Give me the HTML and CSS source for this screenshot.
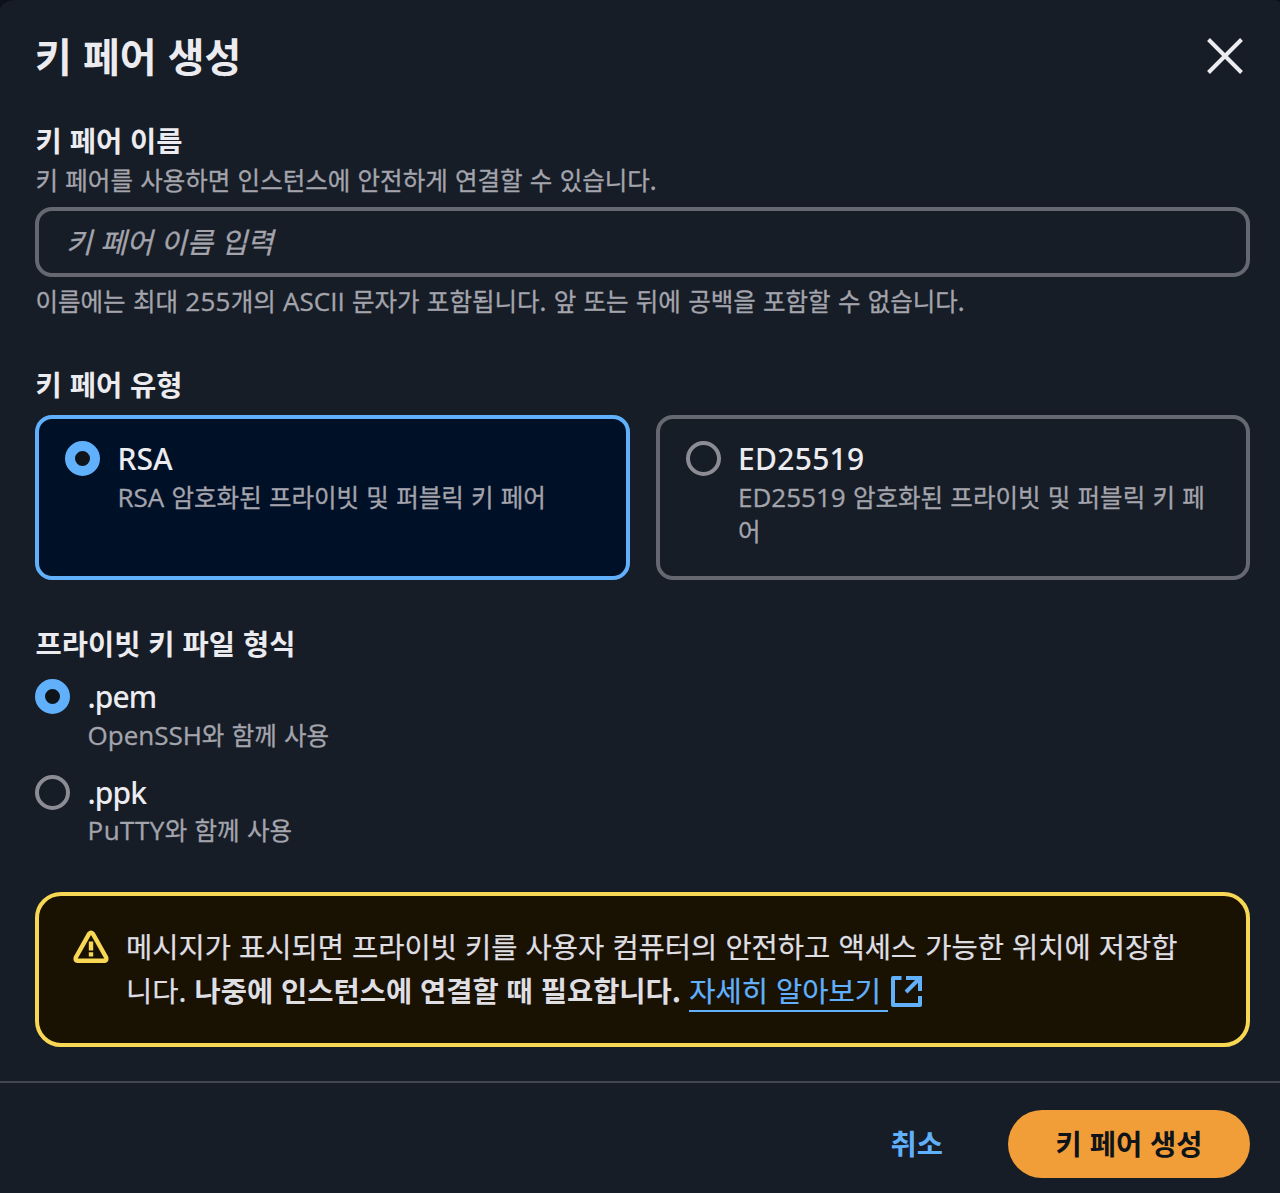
FILE: index.html
```html
<!DOCTYPE html>
<html lang="ko">
<head>
<meta charset="utf-8">
<title>키 페어 생성</title>
<link rel="stylesheet" href="styles.css">
</head>
<body>
<div class="modal" role="dialog" aria-labelledby="title">
  <header class="header">
    <h1 class="title" id="title">키 페어 생성</h1>
    <button class="close" aria-label="닫기">
      <svg width="36" height="36" viewBox="0 0 36 36" fill="none" stroke="#ebebf0" stroke-width="4"><path d="M1.500 1.500L34.500 34.500M34.500 1.500L1.500 34.500"/></svg>
    </button>
  </header>

  <main class="content">
    <section class="field name-field">
      <label class="label" for="name">키 페어 이름</label>
      <p class="desc name-desc">키 페어를 사용하면 인스턴스에 안전하게 연결할 수 있습니다.</p>
      <input class="input" id="name" type="text" placeholder="키 페어 이름 입력">
      <p class="desc constraint">이름에는 최대 <span class="latin digits">255</span>개의 <span class="latin">ASCII</span> 문자가 포함됩니다. 앞 또는 뒤에 공백을 포함할 수 없습니다.</p>
    </section>

    <section class="field type-field">
      <h2 class="label">키 페어 유형</h2>
      <div class="tiles">
        <label class="tile tile-selected">
          <span class="radio radio-on"></span>
          <span class="option">
            <span class="option-name">RSA</span>
            <span class="desc"><span class="latin">RSA</span> 암호화된 프라이빗 및 퍼블릭 키 페어</span>
          </span>
        </label>
        <label class="tile">
          <span class="radio"></span>
          <span class="option">
            <span class="option-name digits">ED25519</span>
            <span class="desc"><span class="latin">ED25519</span> 암호화된 프라이빗 및 퍼블릭 키 페<br>어</span>
          </span>
        </label>
      </div>
    </section>

    <section class="field format-field">
      <h2 class="label">프라이빗 키 파일 형식</h2>
      <div class="radios">
        <label class="radio-row">
          <span class="radio radio-on"></span>
          <span class="option">
            <span class="option-name extension">.pem</span>
            <span class="desc"><span class="latin">OpenSSH</span>와 함께 사용</span>
          </span>
        </label>
        <label class="radio-row">
          <span class="radio"></span>
          <span class="option">
            <span class="option-name extension">.ppk</span>
            <span class="desc"><span class="latin putty">PuTTY</span>와 함께 사용</span>
          </span>
        </label>
      </div>
    </section>

    <section class="alert">
      <svg class="alert-icon" width="36" height="34" viewBox="0 0 36 34" fill="none" stroke="#f8d755" stroke-width="4.400" stroke-linejoin="round"><path d="M16.2 3.700Q18 1.700 19.8 3.700L33.2 27.500Q34 30.800 31.500 30.800H4.500Q2 30.800 2.800 27.500Z"/><path d="M18 11.500V20.500M18 22.300V26.600"/></svg>
      <p class="alert-text">메시지가 표시되면 프라이빗 키를 사용자 컴퓨터의 안전하고 액세스 가능한 위치에 저장합<br>니다. <strong>나중에 인스턴스에 연결할 때 필요합니다.</strong> <a class="link" href="#">자세히 알아보기</a><svg class="ext" width="31" height="31" viewBox="0 0 31 31" fill="none" stroke="#61b0fb" stroke-width="4" stroke-linejoin="round"><path d="M10.500 2H2V29H29V20"/><path stroke-linejoin="miter" d="M15 2H29V15M29 2L15 16"/></svg></p>
    </section>
  </main>

  <footer class="footer">
    <button class="btn btn-link">취소</button>
    <button class="btn btn-primary">키 페어 생성</button>
  </footer>
</div>
</body>
</html>
```
FILE: styles.css
```css
* { box-sizing: border-box; }

body {
  margin: 0;
  background: #0c1119;
  font-family: "Noto Sans CJK KR", sans-serif;
  color: #ebebf0;
}

h1, h2, p { margin: 0; }

button {
  border: 0;
  padding: 0;
  background: none;
  font-family: inherit;
}

.modal {
  display: flex;
  flex-direction: column;
  height: 1193px;
  background: #161d26;
  border-radius: 16px 7px 0 0 / 10px 3px 0 0;
}

.header {
  display: flex;
  justify-content: space-between;
  align-items: center;
  height: 112px;
  padding: 0 37px 0 35px;
}

.title {
  margin-bottom: 3px;
  font-size: 40px;
  font-weight: 700;
  line-height: 60px;
}

.close { display: flex; }

.content {
  flex: 1;
  padding: 8px 30px 0 35px;
}

.label {
  display: block;
  padding-left: 0.5px;
  font-size: 28.5px;
  font-weight: 700;
  line-height: 40px;
}

.desc {
  display: block;
  font-size: 24.5px;
  line-height: 34px;
  color: #a4a4ad;
  white-space: nowrap;
  word-spacing: 0.4px;
  -webkit-text-stroke: 0.3px;
}

.latin {
  font-family: "Open Sans", sans-serif;
  font-size: 26px;
  line-height: 1;
}

.name-field { height: 244px; }

.name-desc {
  margin-top: 3px;
  padding-left: 0.5px;
}

.input {
  display: block;
  width: 100%;
  height: 70px;
  margin-top: 10px;
  padding: 0 27px 4px;
  border: 4px solid #656871;
  border-radius: 17px;
  background: transparent;
  color: #ebebf0;
  font: 28.5px "Noto Sans CJK KR", sans-serif;
}

.input::placeholder {
  color: #a4a4ad;
  font-style: italic;
  opacity: 1;
  -webkit-text-stroke: 0.3px;
}

.constraint {
  margin-top: 7px;
  padding-left: 0.5px;
}

.type-field { height: 259px; }

.tiles {
  display: grid;
  grid-template-columns: 1fr 1fr;
  gap: 26px;
  margin-top: 11px;
}

.tile {
  display: flex;
  gap: 17.5px;
  height: 165px;
  padding: 22px 26px;
  border: 4px solid #656871;
  border-radius: 17px;
}

.tile-selected {
  border-color: #61b0fb;
  background: #001026;
}

.radio {
  flex: none;
  width: 35px;
  height: 35px;
  border: 4px solid #8c8c94;
  border-radius: 50%;
}

.radio-on {
  border: 10px solid #61b0fb;
  background: #0f141a;
}

.option-name {
  display: block;
  height: 38.5px;
  font: 500 30px/36px "Noto Sans", sans-serif;
}

.digits { letter-spacing: 0.3px; }

.extension { letter-spacing: -0.9px; }

.putty { letter-spacing: 0.5px; }

.format-field { height: 269px; }

.radios {
  display: flex;
  flex-direction: column;
  gap: 22.5px;
  margin-top: 16px;
}

.radio-row {
  display: flex;
  gap: 17.5px;
  height: 73px;
}

.alert {
  display: flex;
  gap: 17px;
  height: 155px;
  padding: 28px 34px;
  border: 4px solid #f8d755;
  border-radius: 26px;
  background: #191102;
}

.alert-icon {
  flex: none;
  margin-top: 6px;
}

.alert-text {
  font-size: 28.5px;
  line-height: 43.5px;
  color: #dedee3;
  white-space: nowrap;
  word-spacing: 0.15px;
  -webkit-text-stroke: 0.25px;
}

.alert-text strong {
  word-spacing: -0.1px;
  -webkit-text-stroke: 0;
}

.link {
  color: #61b0fb;
  text-decoration: none;
  border-bottom: 2px solid #61b0fb;
  padding-right: 7px;
}

.ext {
  margin-left: 3px;
  vertical-align: -5px;
}

.footer {
  display: flex;
  justify-content: flex-end;
  align-items: flex-start;
  height: 112px;
  padding: 27px 30px 0;
  border-top: 2px solid #424650;
}

.btn {
  height: 68px;
  padding-bottom: 4px;
  font-size: 28.5px;
  font-weight: 700;
}

.btn-link {
  margin-right: 65px;
  color: #61b0fb;
}

.btn-primary {
  width: 242px;
  border-radius: 34px;
  background: #f19e38;
  color: #0f141a;
}
```
